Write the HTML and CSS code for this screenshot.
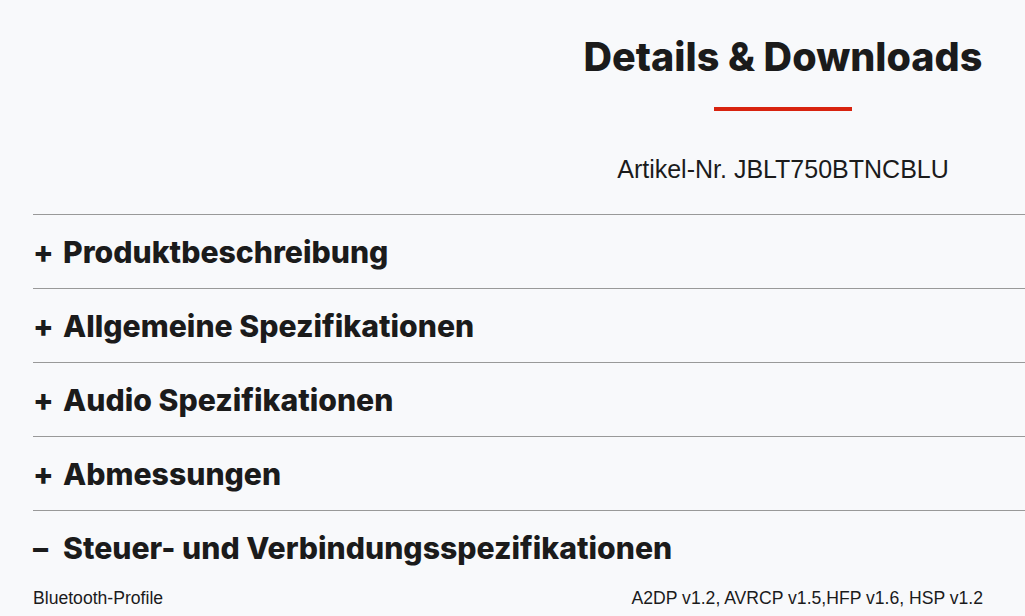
FILE: index.html
```html
<!DOCTYPE html>
<html lang="de">
<head>
<meta charset="utf-8">
<title>Details &amp; Downloads</title>
<link rel="stylesheet" href="styles.css">
</head>
<body>
<main class="page">
  <header class="intro">
    <h2 class="intro-title">Details &amp; Downloads</h2>
    <span class="intro-bar"></span>
    <p class="intro-sku">Artikel-Nr. JBLT750BTNCBLU</p>
  </header>
  <section class="accordion">
    <div class="acc-item"><h3 class="acc-title"><span class="acc-sign">+</span>Produktbeschreibung</h3></div>
    <div class="acc-item"><h3 class="acc-title"><span class="acc-sign">+</span>Allgemeine Spezifikationen</h3></div>
    <div class="acc-item"><h3 class="acc-title"><span class="acc-sign">+</span>Audio Spezifikationen</h3></div>
    <div class="acc-item"><h3 class="acc-title"><span class="acc-sign">+</span>Abmessungen</h3></div>
    <div class="acc-item open">
      <h3 class="acc-title"><span class="acc-sign">–</span>Steuer- und Verbindungsspezifikationen</h3>
      <div class="spec-row"><span class="spec-key">Bluetooth-Profile</span><span class="spec-val">A2DP v1.2, AVRCP v1.5,HFP v1.6, HSP v1.2</span></div>
    </div>
  </section>
</main>
</body>
</html>
```
FILE: styles.css
```css
html, body {
  margin: 0;
  padding: 0;
  background: #f8f9fb;
  color: #1b1b1b;
  font-family: "Liberation Sans", Arial, sans-serif;
  overflow: hidden;
}
.page {
  padding-left: 33px;
}
.intro {
  display: flex;
  flex-direction: column;
  align-items: center;
  margin-left: 508px;
  padding-top: 34px;
}
.intro-title {
  margin: 0;
  font-family: "Inter", "DejaVu Sans", sans-serif;
  font-weight: 800;
  font-size: 39.5px;
  line-height: 46px;
}
.intro-bar {
  display: block;
  width: 138px;
  height: 4px;
  margin-top: 27px;
  background: #d8230f;
}
.intro-sku {
  margin: 44px 0 0;
  font-size: 25px;
  line-height: 29px;
}
.accordion {
  margin-top: 30px;
}
.acc-item {
  border-top: 1px solid #999999;
}
.acc-title {
  margin: 0;
  display: flex;
  align-items: center;
  height: 73px;
  font-family: "Inter", "DejaVu Sans", sans-serif;
  font-weight: 800;
  font-size: 30.2px;
}
.acc-sign {
  width: 30px;
}
.spec-row {
  display: flex;
  justify-content: space-between;
  padding-right: 42px;
  font-size: 17.6px;
  line-height: 20px;
  margin-top: 4px;
}
```
